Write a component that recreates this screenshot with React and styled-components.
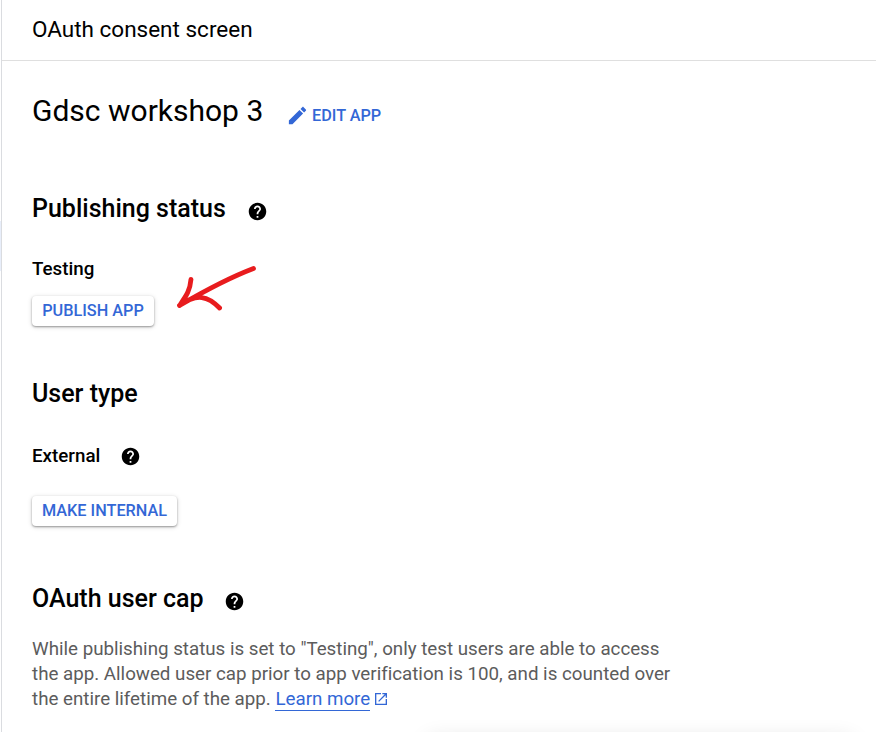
import React from "react";
import styled, { createGlobalStyle } from "styled-components";

const GlobalStyle = createGlobalStyle`
  *, *::before, *::after { box-sizing: border-box; }
  body { margin: 0; background: #fff; font-family: Roboto, "Liberation Sans", sans-serif; color: #000; }
`;

const Page = styled.div`
  position: relative;
  display: flex;
  width: 876px;
  height: 732px;
  overflow: hidden;
`;

const NavEdge = styled.nav`
  width: 2px;
  flex: none;
  padding-top: 221px;
  border-right: 1px solid #dadce0;
`;

const ActiveNavItem = styled.div`
  height: 50px;
  background: #e8eefa;
`;

const Main = styled.main`
  flex: 1;
  min-width: 0;
`;

const Header = styled.header`
  display: flex;
  align-items: center;
  height: 61px;
  padding: 0 30px 2px;
  border-bottom: 1px solid #dfdfdf;
`;

const PageTitle = styled.h1`
  margin: 0;
  font-size: 22.5px;
  font-weight: 400;
  line-height: 30px;
  white-space: nowrap;
`;

const Content = styled.div`
  padding: 30px 30px 0;
`;

const AppRow = styled.div`
  display: flex;
  align-items: center;
  height: 40px;
  margin-bottom: 63px;
`;

const AppName = styled.h2`
  margin: 0;
  width: 253.5px;
  font-size: 30px;
  font-weight: 400;
  line-height: 40px;
  white-space: nowrap;
`;

const EditButton = styled.button`
  display: flex;
  align-items: center;
  gap: 3.5px;
  margin-top: 9px;
  padding: 0;
  border: 0;
  background: none;
  color: #3367d6;
  font: 500 16.25px/20px Roboto, sans-serif;
  white-space: nowrap;
`;

const Section = styled.section`
  height: ${(p) => p.$height}px;
`;

const HeadingRow = styled.div`
  display: flex;
  align-items: center;
  height: 30px;
  gap: ${(p) => p.$gap || 0}px;
`;

const Heading = styled.h3`
  margin: 0;
  font-size: 25px;
  font-weight: 500;
  line-height: 30px;
  white-space: nowrap;
`;

const ValueRow = styled.div`
  display: flex;
  align-items: center;
  gap: 19.5px;
  height: 24px;
  margin-top: ${(p) => p.$top}px;
`;

const Value = styled.span`
  font-size: 18.75px;
  font-weight: 500;
  line-height: 24px;
  white-space: nowrap;
`;

const HelpSvg = styled.svg`
  flex: none;
  width: 21px;
  height: 21px;
  margin-top: ${(p) => p.$drop}px;
  fill: #000;
`;

const ActionRow = styled.div`
  display: flex;
  align-items: flex-start;
  margin-top: ${(p) => p.$top}px;
`;

const RaisedButton = styled.button`
  width: ${(p) => p.$width}px;
  height: 30px;
  padding: 0;
  border: 0;
  border-radius: 4px;
  background: #fff;
  color: #3367d6;
  box-shadow: 0 1px 2px rgba(0, 0, 0, 0.34), 0 1px 5px rgba(0, 0, 0, 0.16);
  font: 500 16.25px/30px Roboto, sans-serif;
  white-space: nowrap;
`;

const ArrowSvg = styled.svg`
  width: 90px;
  height: 56px;
  margin: -34px 0 -20px 18px;
  fill: none;
  stroke: #e81c1e;
  stroke-width: 4.8;
  stroke-linecap: round;
  stroke-linejoin: round;
`;

const Description = styled.p`
  margin: 23px 0 0;
  color: #5c5c5c;
  font-size: 18.75px;
  line-height: 25px;
  letter-spacing: -0.008px;
  white-space: nowrap;
`;

const Link = styled.a`
  display: inline-block;
  height: 24px;
  border-bottom: 1px solid #3367d6;
  color: #3367d6;
`;

const ExternalSvg = styled.svg`
  width: 16px;
  height: 16px;
  margin-left: 3px;
  vertical-align: -2px;
  fill: #3367d6;
`;

const PopupShadow = styled.div`
  position: absolute;
  left: 430px;
  top: 742px;
  width: 420px;
  height: 60px;
  box-shadow: 0 0 22px 2px rgba(0, 0, 0, 0.14);
`;

const Help = ({ drop = 5 }) => (
  <HelpSvg viewBox="0 0 24 24" $drop={drop}>
    <path d="M12 2C6.48 2 2 6.48 2 12s4.48 10 10 10 10-4.48 10-10S17.52 2 12 2zm1 17h-2v-2h2v2zm2.07-7.75l-.9.92C13.45 12.9 13 13.5 13 15h-2v-.5c0-1.1.45-2.1 1.17-2.83l1.24-1.26c.37-.36.59-.86.59-1.41 0-1.1-.9-2-2-2s-2 .9-2 2H8c0-2.21 1.79-4 4-4s4 1.79 4 4c0 .88-.36 1.68-.93 2.25z" />
  </HelpSvg>
);

export default function App() {
  return (
    <>
      <GlobalStyle />
      <Page>
        <NavEdge>
          <ActiveNavItem />
        </NavEdge>
        <Main>
          <Header>
            <PageTitle>OAuth consent screen</PageTitle>
          </Header>
          <Content>
            <AppRow>
              <AppName>Gdsc workshop 3</AppName>
              <EditButton>
                <svg width="23" height="23" viewBox="0 0 24 24" fill="#3367d6">
                  <path d="M3 17.25V21h3.75L17.81 9.94l-3.75-3.75L3 17.25zM20.71 7.04c.39-.39.39-1.02 0-1.41l-2.34-2.34c-.39-.39-1.02-.39-1.41 0l-1.83 1.83 3.75 3.75 1.83-1.83z" />
                </svg>
                EDIT APP
              </EditButton>
            </AppRow>
            <Section $height={185}>
              <HeadingRow $gap={21}>
                <Heading>Publishing status</Heading>
                <Help />
              </HeadingRow>
              <ValueRow $top={33}>
                <Value>Testing</Value>
              </ValueRow>
              <ActionRow $top={15}>
                <RaisedButton $width={122}>PUBLISH APP</RaisedButton>
                <ArrowSvg viewBox="172 262 90 56">
                  <path d="M253.5 268.5C231 277 213 286 179.5 305.5C186 296 190 291 191 279.3M179.5 305.5C197 293 208 296 219.6 308" />
                </ArrowSvg>
              </ActionRow>
            </Section>
            <Section $height={205}>
              <HeadingRow>
                <Heading>User type</Heading>
              </HeadingRow>
              <ValueRow $top={35}>
                <Value>External</Value>
                <Help drop={1} />
              </ValueRow>
              <ActionRow $top={28}>
                <RaisedButton $width={145}>MAKE INTERNAL</RaisedButton>
              </ActionRow>
            </Section>
            <Section $height={150}>
              <HeadingRow $gap={20.5}>
                <Heading>OAuth user cap</Heading>
                <Help />
              </HeadingRow>
              <Description>
                While publishing status is set to "Testing", only test users are able to access
                <br />
                the app. Allowed user cap prior to app verification is 100, and is counted over
                <br />
                the entire lifetime of the app. <Link>Learn more</Link>
                <ExternalSvg viewBox="0 0 24 24">
                  <path d="M19 19H5V5h7V3H3v18h18v-9h-2v7zM14 3v2h3.59l-9.83 9.83 1.41 1.41L19 6.41V10h2V3h-7z" />
                </ExternalSvg>
              </Description>
            </Section>
          </Content>
        </Main>
        <PopupShadow />
      </Page>
    </>
  );
}
